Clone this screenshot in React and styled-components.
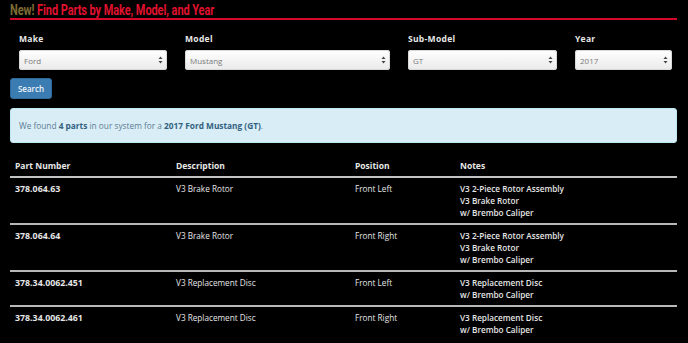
import React from "react";
import styled, { createGlobalStyle } from "styled-components";

const Global = createGlobalStyle`
  html, body { margin: 0; padding: 0; background: #000; }
  body { font-family: "Open Sans", "Noto Sans", sans-serif; color: #e4e4e4; }
`;

const Page = styled.div`
  padding: 0 11px 0 10px;
`;

const Title = styled.h2`
  margin: 0;
  padding-top: 3px;
  font-family: "Roboto", "Liberation Sans", sans-serif;
  font-size: 14px;
  line-height: 15px;
  font-weight: 700;
  color: #e0112e;
  border-bottom: 2px solid #d4082a;
  white-space: nowrap;
`;

const TitleText = styled.span`
  display: inline-block;
  transform: scaleX(0.785);
  transform-origin: left center;
  letter-spacing: -0.1px;
`;

const New = styled.span`
  color: #7f6c33;
`;

const Form = styled.div`
  display: grid;
  grid-template-columns: 148fr 205fr 149fr 97fr;
  column-gap: 18px;
  padding: 0 5px 0 9px;
  margin-top: 13px;
`;

const Field = styled.div`
  display: flex;
  flex-direction: column;
`;

const Label = styled.label`
  font-size: 8.5px;
  line-height: 12px;
  font-weight: 700;
  letter-spacing: 0.3px;
  color: #e8e8e8;
  margin-bottom: 5px;
`;

const SelectBox = styled.div`
  height: 20px;
  border-radius: 3px;
  background: linear-gradient(#ffffff, #e9e9e9);
  box-shadow: inset 0 0 0 1px #d8d8d8;
  display: flex;
  align-items: center;
  justify-content: space-between;
  padding: 0 4px 0 5px;
  box-sizing: border-box;
  font-size: 8px;
  color: #7a7a7a;
`;

const Arrows = () => (
  <svg width="5" height="8" viewBox="0 0 5 8">
    <path d="M2.5 0.5 L4.5 3 L0.5 3 Z" fill="#444" />
    <path d="M2.5 7.5 L4.5 5 L0.5 5 Z" fill="#444" />
  </svg>
);

const Button = styled.button`
  margin-top: 8px;
  width: 42px;
  height: 21px;
  padding: 0;
  border: 1px solid #2f6b9a;
  border-radius: 3px;
  background: #3b7db2;
  color: #eef4f9;
  font-family: "Open Sans", sans-serif;
  font-size: 8px;
  font-weight: 600;
  display: block;
`;

const Alert = styled.div`
  margin-top: 9px;
  height: 35px;
  box-sizing: border-box;
  border: 1px solid #bce8f1;
  border-radius: 3px;
  background: #d9edf7;
  color: #5d7d92;
  font-size: 8.3px;
  display: flex;
  align-items: center;
  padding-left: 8px;
  b { color: #31617f; font-weight: 700; }
`;

const Table = styled.table`
  margin-top: 12px;
  width: 100%;
  border-collapse: collapse;
  table-layout: fixed;
`;

const Th = styled.th`
  width: ${(p) => p.w || "auto"};
  text-align: left;
  font-size: 8.5px;
  font-weight: 700;
  line-height: 12px;
  padding: 5px 5px 4px;
  color: #e8e8e8;
  border-bottom: 2px solid #c4c4c4;
`;

const Tr = styled.tr`
  border-bottom: ${(p) => (p.last ? "none" : "2px solid #b8b8b8")};
`;

const Td = styled.td`
  vertical-align: top;
  font-size: ${(p) => p.size || "8.2px"};
  line-height: 12px;
  padding: 5px 5px 4px;
  font-weight: ${(p) => p.weight || 400};
  color: #e6e6e6;
`;

const rows = [
  { pn: "378.064.63", desc: "V3 Brake Rotor", pos: "Front Left", notes: ["V3 2-Piece Rotor Assembly", "V3 Brake Rotor", "w/ Brembo Caliper"] },
  { pn: "378.064.64", desc: "V3 Brake Rotor", pos: "Front Right", notes: ["V3 2-Piece Rotor Assembly", "V3 Brake Rotor", "w/ Brembo Caliper"] },
  { pn: "378.34.0062.451", desc: "V3 Replacement Disc", pos: "Front Left", notes: ["V3 Replacement Disc", "w/ Brembo Caliper"] },
  { pn: "378.34.0062.461", desc: "V3 Replacement Disc", pos: "Front Right", notes: ["V3 Replacement Disc", "w/ Brembo Caliper"] },
];

const fields = [
  ["Make", "Ford"],
  ["Model", "Mustang"],
  ["Sub-Model", "GT"],
  ["Year", "2017"],
];

export default function App() {
  return (
    <Page>
      <Global />
      <Title>
        <TitleText>
          <New>New!</New> Find Parts by Make, Model, and Year
        </TitleText>
      </Title>
      <Form>
        {fields.map(([l, v]) => (
          <Field key={l}>
            <Label>{l}</Label>
            <SelectBox>
              <span>{v}</span>
              <Arrows />
            </SelectBox>
          </Field>
        ))}
      </Form>
      <Button>Search</Button>
      <Alert>
        <span>
          We found <b>4 parts</b> in our system for a <b>2017 Ford Mustang (GT)</b>.
        </span>
      </Alert>
      <Table>
        <thead>
          <tr>
            <Th w="151px">Part Number</Th>
            <Th w="169px">Description</Th>
            <Th w="95px">Position</Th>
            <Th>Notes</Th>
          </tr>
        </thead>
        <tbody>
          {rows.map((r, i) => (
            <Tr key={r.pn} last={i === rows.length - 1}>
              <Td weight={700} size="8.8px">{r.pn}</Td>
              <Td weight={500}>{r.desc}</Td>
              <Td weight={500}>{r.pos}</Td>
              <Td weight={600}>
                {r.notes.map((n) => (
                  <div key={n}>{n}</div>
                ))}
              </Td>
            </Tr>
          ))}
        </tbody>
      </Table>
    </Page>
  );
}
